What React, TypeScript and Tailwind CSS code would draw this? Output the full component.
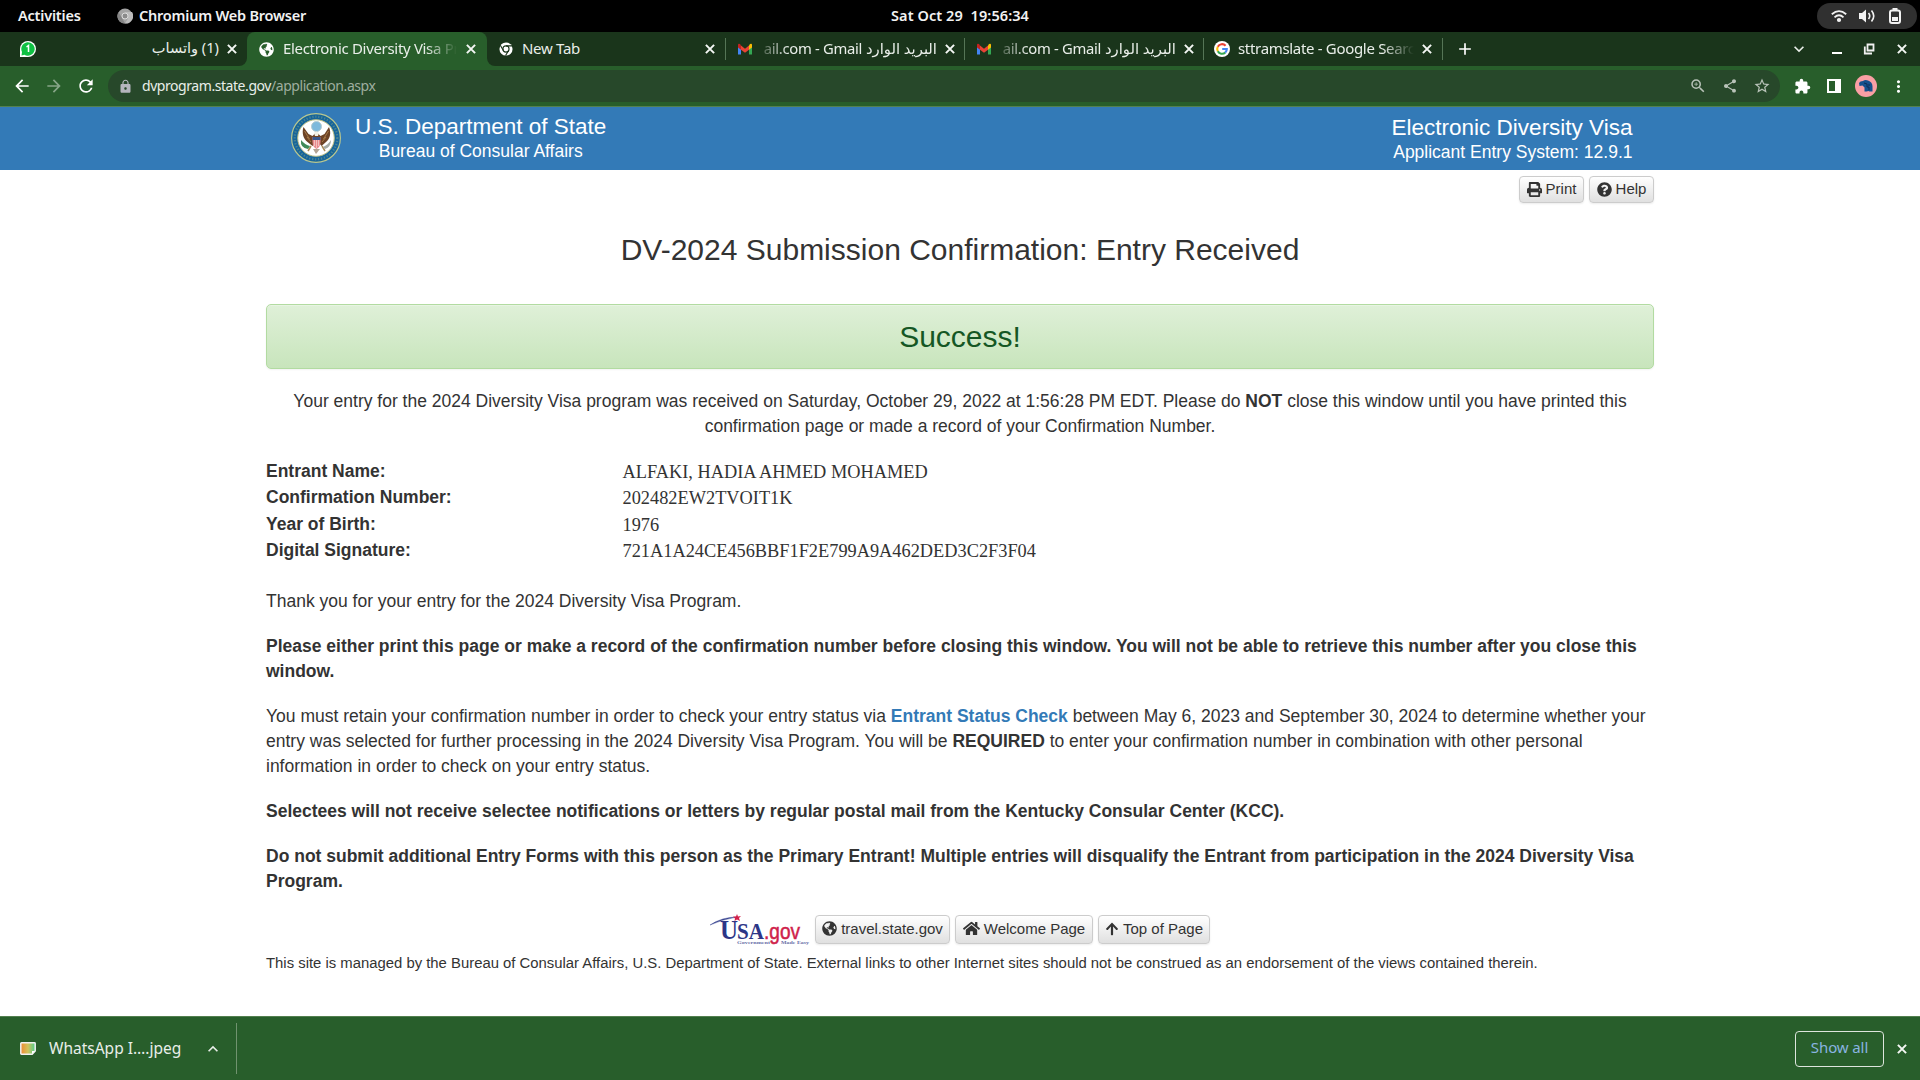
import React from "react";
import {
  MdArrowBack, MdArrowForward, MdRefresh, MdLock, MdZoomIn, MdShare, MdStarBorder, MdExtension,
  MdMoreVert, MdAdd, MdKeyboardArrowDown, MdKeyboardArrowUp,
} from "react-icons/md";
import { FaPrint, FaQuestionCircle, FaGlobeAmericas, FaHome, FaArrowUp } from "react-icons/fa";

function Gmail() {
  return (
    <svg className="size-4 shrink-0" viewBox="0 0 16 16">
      <path d="M1 3.5v10h3V8z" fill="#4285f4" />
      <path d="M15 3.5v10h-3V8z" fill="#34a853" />
      <path d="M12 4.5 13 3q2-1 2 1v2.500l-3 2.300z" fill="#fbbc04" />
      <path d="M4 4.500 3 3Q1 2 1 4v2.500l3 2.300z" fill="#c5221f" />
      <path d="M4 4.500 8 7.700l4-3.200v4.300l-4 3-4-3z" fill="#ea4335" />
    </svg>
  );
}

function WhatsApp() {
  return (
    <svg className="size-4 shrink-0" viewBox="0 0 16 16">
      <path d="M0 16V8a8 8 0 1 1 8 8z" fill="#fff" />
      <path d="M1.500 14.500 2 11a6.700 6.700 0 1 1 2.500 2.700z" fill="#0fc143" />
      <path d="M6.500 6 8.500 4.500V11" fill="none" stroke="#fff" strokeWidth="1.500" />
    </svg>
  );
}

function Chrome() {
  return (
    <svg className="size-[14px] shrink-0" viewBox="0 0 16 16">
      <circle cx="8" cy="8" r="7.500" fill="#fff" />
      <circle cx="8" cy="8" r="3.500" fill="none" stroke="#1a351b" strokeWidth="1.300" />
      <path d="M8 4.500h7M5 9.800 1.500 3.800M11 9.800 7.500 15.500" stroke="#1a351b" strokeWidth="1.300" />
    </svg>
  );
}

function Google() {
  return (
    <svg className="size-4 shrink-0" viewBox="0 0 16 16">
      <circle cx="8" cy="8" r="8" fill="#fff" />
      <g fill="none" strokeWidth="2.100">
        <path d="M11.600 4.700A4.800 4.800 0 0 0 3.800 5.700" stroke="#ea4335" />
        <path d="M3.800 5.700a4.800 4.800 0 0 0 0 4.600" stroke="#fbbc05" />
        <path d="M3.800 10.300a4.800 4.800 0 0 0 7.400 1.300" stroke="#34a853" />
        <path d="M11.200 11.600A4.800 4.800 0 0 0 12.800 8H8.200" stroke="#4285f4" />
      </g>
    </svg>
  );
}

function Seal() {
  return (
    <svg className="size-[50px] shrink-0" viewBox="0 0 50 50">
      <circle cx="25" cy="25" r="24.400" fill="#17659a" stroke="#b9c78f" strokeWidth="1.200" />
      <circle cx="25" cy="25" r="21.300" fill="none" stroke="#8fae8c" strokeWidth="2.200" strokeDasharray="1.200 1.800" opacity=".45" />
      <circle cx="25" cy="25" r="18.300" fill="#fff" stroke="#b9bd83" strokeWidth="1" />
      <circle cx="25.500" cy="13.500" r="5" fill="#7db9dc" stroke="#b4cbd0" strokeWidth="1" />
      <path d="M12.500 14c-2 6 0 12 4 15l5 4 4-6 5 6 4.500-4c4-3 5.500-9 3-15l-4.500 7-4 2-4-4-4 4-4-2z" fill="#6d4326" />
      <path d="M13.500 18l5 8M37.500 18l-5 8M16 24l4 5M35 24l-4 5" stroke="#a87a48" strokeWidth="1" />
      <path d="M23 20q2-3 5 0l-1 3h-3z" fill="#f2efe5" />
      <path d="M21.500 24h8v5c0 4-2 6-4 7-2-1-4-3-4-7z" fill="#e98a8d" />
      <path d="M21.500 24h8v3h-8z" fill="#39568c" />
      <path d="M23.500 27v6M25.500 27v8M27.500 27v6" stroke="#f5d7d4" strokeWidth=".7" />
      <path d="M20 33l-3 5M31 33l3 5" stroke="#a98a56" strokeWidth="1.500" />
      <path d="M22 36l3 5 4-5z" fill="#b3a493" />
      <path d="M10 27q-1 8 7 9l2-3q-5-1-9-6z" fill="#3f8a58" />
      <path d="M40 27q0 7-6 9l-2-2q5-2 8-7z" fill="#a5aaa4" />
    </svg>
  );
}

function UsaGov() {
  return (
    <svg className="h-[31px] w-[100px] shrink-0" viewBox="0 0 100 31">
      <path d="M0 11Q12 3 27 3Q12 5.500 0 11z" fill="#3b4692" stroke="#3b4692" strokeWidth=".4" />
      <path d="M27 0l1 2.500 3-.5-2 2 1 3-3-1.500-2.500 1.500.5-2.500-2-2h3z" fill="#d3204a" />
      <text x="10" y="25" fontFamily="Liberation Serif" fontWeight="700" fontSize="28" textLength="18" lengthAdjust="spacingAndGlyphs" fill="#2d3687">U</text>
      <text x="27" y="25" fontFamily="Liberation Serif" fontWeight="700" fontSize="23" textLength="27" lengthAdjust="spacingAndGlyphs" fill="#2d3687">SA</text>
      <text x="54" y="25" fontFamily="Liberation Sans" fontSize="22" textLength="36" lengthAdjust="spacingAndGlyphs" fill="#cf1f4c" stroke="#cf1f4c" strokeWidth=".5">.gov</text>
      <text x="27" y="30" fontFamily="Liberation Serif" fontWeight="700" fontSize="5" textLength="33" lengthAdjust="spacingAndGlyphs" fill="#6a70a8">Government</text>
      <text x="71" y="30" fontFamily="Liberation Serif" fontWeight="700" fontSize="5" textLength="28" lengthAdjust="spacingAndGlyphs" fill="#6a70a8">Made Easy</text>
    </svg>
  );
}

function Btn({ icon, children, className }: { icon: React.ReactNode; children: React.ReactNode; className: string }) {
  return (
    <button className={`${className} flex items-center justify-center gap-1 whitespace-nowrap rounded-[4px] border border-[#ccc] bg-linear-to-b from-white to-[#e0e0e0] pb-px text-[15px] leading-[22px] text-[#333] shadow-[0_1px_2px_rgba(0,0,0,0.08)]`}>
      {icon}
      <span>{children}</span>
    </button>
  );
}

function Close() {
  return (
    <svg className="size-3 shrink-0" viewBox="0 0 12 12">
      <path d="M1.900 1.900l8.200 8.200M10.100 1.900 1.900 10.100" stroke="#f4f7f4" strokeWidth="2" />
    </svg>
  );
}

const fadeR = "[mask-image:linear-gradient(to_right,#000_82%,transparent)]";
const fadeL = "[mask-image:linear-gradient(to_left,#000_85%,transparent_105%)]";

function GmailTab() {
  return (
    <div className="flex h-full w-[238px] items-center pl-[11px]">
      <Gmail />
      <div dir="rtl" className={`mb-0.5 ml-2.5 h-6 w-[174px] overflow-hidden whitespace-nowrap text-[14.800px] leading-6 ${fadeL}`}>
        البريد الوارد <bdi dir="ltr" className="tracking-[-0.3px]">ail.com - Gmail</bdi>
      </div>
      <div className="ml-[7px]"><Close /></div>
    </div>
  );
}

const rows = [
  ["Entrant Name:", "ALFAKI, HADIA AHMED MOHAMED"],
  ["Confirmation Number:", "202482EW2TVOIT1K"],
  ["Year of Birth:", "1976"],
  ["Digital Signature:", "721A1A24CE456BBF1F2E799A9A462DED3C2F3F04"],
];

export default function App() {
  return (
    <div className="flex h-[1080px] w-[1920px] flex-col overflow-hidden bg-white font-['Noto_Sans','DejaVu_Sans',sans-serif]">
      <div className="grid h-8 shrink-0 grid-cols-3 items-center bg-black text-[14.500px] font-semibold text-[#f2f2f2]">
        <div className="flex items-center pl-[18px]">
          <span className="w-[99px] tracking-[-0.200px]">Activities</span>
          <svg className="size-4" viewBox="0 0 16 16">
            <circle cx="8" cy="8" r="7.500" fill="#a3a3a3" />
            <path d="M8 4h7A7.500 7.500 0 0 1 8 15.500l3-5z" fill="#bcbcbc" />
            <path d="M1.500 4 5 10l3 5.500A7.500 7.500 0 0 1 1.500 4z" fill="#858585" />
            <circle cx="8" cy="8" r="3" fill="#8b8b8b" stroke="#ddd" />
          </svg>
          <span className="ml-1.5 whitespace-nowrap tracking-[-0.220px]">Chromium Web Browser</span>
        </div>
        <div className="whitespace-pre text-center tracking-[0.080px]">Sat Oct 29  19:56:34</div>
        <div className="mr-[3px] flex h-[26px] w-[100px] items-center justify-between justify-self-end rounded-full bg-[#303030]">
          <svg className="ml-3.5 size-4" viewBox="0 0 16 16" fill="none" stroke="#f2f2f2" strokeWidth="1.800">
            <path d="M.800 6.200q7.200-6.200 14.400 0M3.500 9.300q4.500-4 9 0" /><circle cx="8" cy="12" r="1.200" fill="#f2f2f2" />
          </svg>
          <svg className="size-4" viewBox="0 0 16 16" fill="none" stroke="#f2f2f2" strokeWidth="1.600">
            <path d="M0 5h3l4-3.500v13L3 11H0z" fill="#f2f2f2" stroke="none" /><path d="M9.500 5q2.500 3 0 6M12.500 2.500q4.500 5.500 0 11" />
          </svg>
          <svg className="mr-3.5 size-4" viewBox="0 0 16 16">
            <rect x="3" y="2.500" width="10" height="12.500" rx="2" fill="none" stroke="#f2f2f2" strokeWidth="2" /><path d="M5.500 0h5v2h-5zM5 9h6v4H5z" fill="#f2f2f2" />
          </svg>
        </div>
      </div>

      <div className="flex h-[34px] shrink-0 items-center bg-[#1a351b] text-[15px] text-[#e9eee9]">
        <div className="h-full w-[247px] bg-[#285e2b]">
          <div className="flex h-full items-center rounded-br-[8px] bg-[#1a351b] pl-5">
            <WhatsApp />
            <span dir="rtl" className="mb-0.5 ml-auto whitespace-nowrap text-[14.600px]">(1) واتساب</span>
            <div className="mr-[9px] ml-[7px]"><Close /></div>
          </div>
        </div>
        <div className="flex h-full w-[240px] items-center rounded-t-[8px] bg-[#285e2b] pl-3">
          <FaGlobeAmericas className="size-[15px] shrink-0 text-white" />
          <div className={`mb-0.5 ml-[9px] w-[174px] overflow-hidden whitespace-nowrap tracking-[-0.320px] ${fadeR}`}>Electronic Diversity Visa Program</div>
          <div className="ml-2"><Close /></div>
        </div>
        <div className="h-full w-[238px] bg-[linear-gradient(to_right,#285e2b_50%,#1a351b_50%)]">
          <div className="flex h-full items-center rounded-bl-[8px] bg-[#1a351b] pl-3">
            <Chrome />
            <div className="mb-0.5 ml-[9px] w-[182px] tracking-[-0.300px]">New Tab</div>
            <Close />
          </div>
        </div>
        <div className="h-[22px] w-px bg-[#557556]" />
        <GmailTab />
        <div className="h-[22px] w-px bg-[#557556]" />
        <GmailTab />
        <div className="h-[22px] w-px bg-[#557556]" />
        <div className="flex h-full w-[238px] items-center pl-2.5">
          <Google />
          <div className={`mb-0.5 ml-2 w-[176px] overflow-hidden whitespace-nowrap tracking-[-0.320px] ${fadeR}`}>sttramslate - Google Search</div>
          <div className="ml-[7px]"><Close /></div>
        </div>
        <div className="h-[22px] w-px bg-[#557556]" />
        <MdAdd className="ml-[12px] size-5 text-white" />
        <div className="mr-3 ml-auto flex items-center">
          <MdKeyboardArrowDown className="mr-[22px] size-5" />
          <svg className="mr-5 size-3" viewBox="0 0 12 12"><path d="M1 9h10v2H1z" fill="#fff" /></svg>
          <svg className="mr-[21px] size-3" viewBox="0 0 12 12" fill="none" stroke="#f0f0f0" strokeWidth="1.800"><path d="M4.500 1.500h6v6h-6zM1.800 3.500v7H9" /></svg>
          <Close />
        </div>
      </div>

      <div className="flex h-10 shrink-0 items-center bg-[#285e2b] text-white">
        <MdArrowBack className="ml-3 size-5" />
        <MdArrowForward className="ml-3 size-5 text-[#87a588]" />
        <MdRefresh className="ml-3 size-5" />
        <div className="ml-3 flex h-8 w-[1672px] items-center rounded-full bg-[#27482a] pr-[9px] pl-2.5 text-[14px] text-[#9fae9f]">
          <MdLock className="size-[15px] text-[#b5b5bd]" />
          <span className="mb-px ml-[9px] tracking-[-0.440px]"><span className="text-[#e9eee9]">dvprogram.state.gov</span>/application.aspx</span>
          <MdZoomIn className="ml-auto size-[18px] text-[#b9c3b9]" />
          <MdShare className="ml-[15px] size-4 text-[#b9c3b9]" />
          <MdStarBorder className="ml-[15px] size-[18px] text-[#b9c3b9]" />
        </div>
        <MdExtension className="ml-[14px] size-[17px]" />
        <svg className="ml-[16px] size-[14px]" viewBox="0 0 14 14"><path d="M0 0h14v14H0zM2 2v10h6V2z" fill="#fff" fillRule="evenodd" /></svg>
        <svg className="ml-[14px] size-[22px]" viewBox="0 0 22 22">
          <circle cx="11" cy="11" r="11" fill="#fa9fa4" />
          <path d="M4 8q1-2 4-2 2-1.500 5-.500 4.500 1.500 4.500 6v5h-3l-1-.5-2 .5h-2v-4l-2-2-3 .5z" fill="#15508d" /><path d="M9 8l3 1v3h2v3M14 9v2" fill="none" stroke="#102c54" />
        </svg>
        <MdMoreVert className="ml-3 size-[19px]" />
      </div>
      <div className="h-px shrink-0 bg-[#53804f]" />

      <div className="h-[909px] shrink-0 font-['Liberation_Sans',Arial,sans-serif] text-[17.500px] leading-[25px] text-[#333]">
        <header className="flex h-[63px] justify-between bg-[#337ab7] pr-[287.500px] pl-[291px] text-white">
          <div className="flex pt-1.5">
            <Seal />
            <div className="ml-3.5 text-center"><div className="mt-[2px] text-[22.500px] leading-6">U.S. Department of State</div><div className="leading-[25px]">Bureau of Consular Affairs</div></div>
          </div>
          <div className="pt-[9px] text-right"><div className="text-[22.500px] leading-6">Electronic Diversity Visa</div><div>Applicant Entry System: 12.9.1</div></div>
        </header>
        <main className="mx-auto w-[1388px]">
          <div className="flex justify-end gap-[5px] pt-1.5">
            <Btn className="h-[27px] w-[65px]" icon={<FaPrint className="size-[15px]" />}>Print</Btn>
            <Btn className="h-[27px] w-[65px]" icon={<FaQuestionCircle className="size-[15px]" />}>Help</Btn>
          </div>
          <h1 className="mt-[30px] text-center text-[30px] leading-[33px]">DV-2024 Submission Confirmation: Entry Received</h1>
          <div className="mt-[38px] h-[65px] rounded-[5px] border border-[#b2dba1] bg-linear-to-b from-[#dff0d8] to-[#c8e5bc] text-center text-[30px] leading-[64px] text-[#155724] shadow-[inset_0_1px_0_rgba(255,255,255,0.25),0_1px_2px_rgba(0,0,0,0.05)]">Success!</div>
          <p className="mt-5 px-[19px] text-center">Your entry for the 2024 Diversity Visa program was received on Saturday, October 29, 2022 at 1:56:28 PM EDT. Please do <b>NOT</b> close this window until you have printed this confirmation page or made a record of your Confirmation Number.</p>
          <dl className="mt-5">
            {rows.map(([k, v]) => (
              <div key={k} className="flex h-[26.400px]">
                <dt className="w-[356.500px] font-bold">{k}</dt>
                <dd className="pt-px font-['Liberation_Serif',serif] text-[18.330px]">{v}</dd>
              </div>
            ))}
          </dl>
          <p className="mt-[24px]">Thank you for your entry for the 2024 Diversity Visa Program.</p>
          <p className="mt-5 font-bold">Please either print this page or make a record of the confirmation number before closing this window. You will not be able to retrieve this number after you close this window.</p>
          <p className="mt-5">You must retain your confirmation number in order to check your entry status via <b className="text-[#337ab7]">Entrant Status Check</b> between May 6, 2023 and September 30, 2024 to determine whether your entry was selected for further processing in the 2024 Diversity Visa Program. You will be <b>REQUIRED</b> to enter your confirmation number in combination with other personal information in order to check on your entry status.</p>
          <p className="mt-5 font-bold">Selectees will not receive selectee notifications or letters by regular postal mail from the Kentucky Consular Center (KCC).</p>
          <p className="mt-5 font-bold">Do not submit additional Entry Forms with this person as the Primary Entrant! Multiple entries will disqualify the Entrant from participation in the 2024 Diversity Visa Program.</p>
          <div className="mt-5 flex items-center justify-center gap-[5px]">
            <UsaGov />
            <Btn className="h-[29px] w-[135px]" icon={<FaGlobeAmericas className="size-[15px]" />}>travel.state.gov</Btn>
            <Btn className="h-[29px] w-[138px]" icon={<FaHome className="size-[17px]" />}>Welcome Page</Btn>
            <Btn className="h-[29px] w-[112px]" icon={<FaArrowUp className="size-[14px]" />}>Top of Page</Btn>
          </div>
          <p className="mt-1.5 text-[14.875px]">This site is managed by the Bureau of Consular Affairs, U.S. Department of State. External links to other Internet sites should not be construed as an endorsement of the views contained therein.</p>
        </main>
      </div>

      <footer className="flex h-16 shrink-0 items-center border-t border-[#53804f] bg-[#285e2b] text-[15.500px] text-[#e9eee9]">
        <svg className="ml-5 h-[13px] w-4" viewBox="0 0 16 13">
          <defs><linearGradient id="thumb"><stop stopColor="#f08a32" /><stop offset=".5" stopColor="#d3c35b" /><stop offset="1" stopColor="#4fd08f" /></linearGradient></defs>
          <path d="M1.500.800h13q.700 0 .700.700V9l-3 3.200H1.500q-.700 0-.700-.700v-10q0-.700.700-.700z" fill="url(#thumb)" stroke="#f1f1f1" strokeWidth="1.500" /><path d="M12 12V9h3z" fill="#fff" />
        </svg>
        <span className="ml-[13px] w-[154px]">WhatsApp I….jpeg</span>
        <MdKeyboardArrowUp className="size-5" />
        <div className="ml-[13px] h-[51px] w-px bg-[#70936f]" />
        <div className="ml-auto flex h-9 w-[89px] items-center justify-center rounded-[4px] border border-[#dde5dd] pb-0.5 text-[15px] tracking-[-0.100px] text-[#8ab4e0]">Show all</div>
        <div className="mr-3 ml-3"><Close /></div>
      </footer>
    </div>
  );
}
